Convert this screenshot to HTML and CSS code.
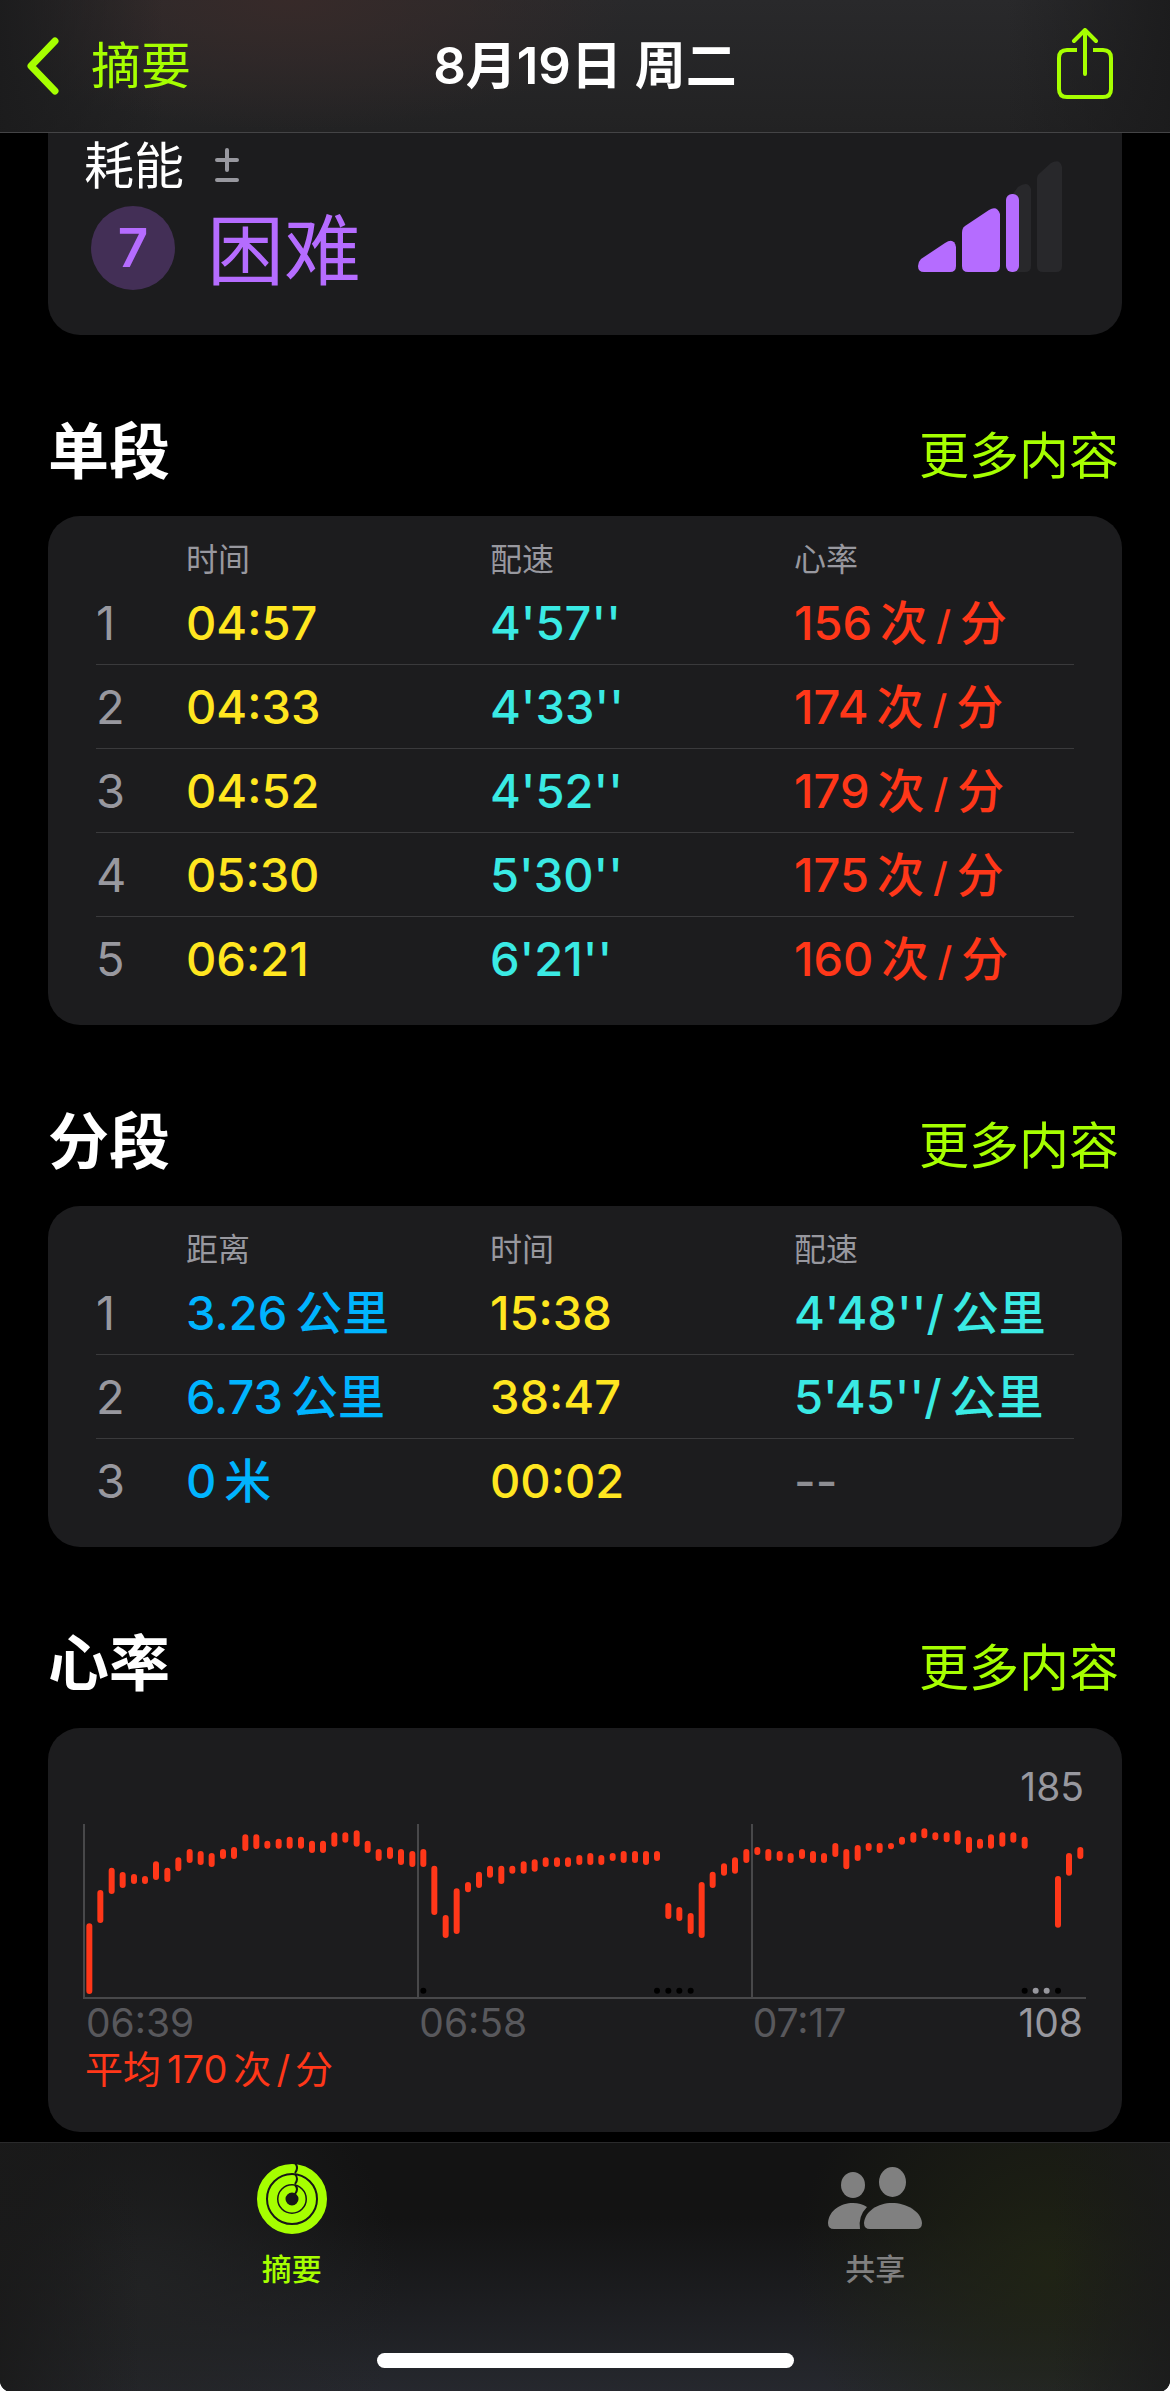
FILE: index.html
```html
<!DOCTYPE html>
<html lang="zh-CN">
<head>
<meta charset="utf-8">
<meta name="viewport" content="width=device-width, initial-scale=1">
<title>8月19日 周二</title>
<link rel="stylesheet" href="styles.css">
</head>
<body>
<div class="app">
  <header class="navbar">
    <a class="navbar-back" href="#summary">
      <svg width="35" height="60" viewBox="0 0 35 60" aria-hidden="true"><path d="M30 5 6 30 30 55" fill="none" stroke="currentColor" stroke-width="7" stroke-linecap="round" stroke-linejoin="round"/></svg>
      <span>摘要</span>
    </a>
    <h1 class="navbar-title">8月19日 周二</h1>
    <button class="navbar-share" type="button" aria-label="分享">
      <svg width="56" height="72" viewBox="0 2 56 72" aria-hidden="true"><g fill="none" stroke="currentColor" stroke-width="4" stroke-linecap="round" stroke-linejoin="round"><path d="M20 24H10q-8 0-8 8v31q0 8 8 8h36q8 0 8-8V32q0-8-8-8H36" stroke-linecap="butt"/><path d="M28 48V4M17 15 28 4l11 11"/></g></svg>
    </button>
  </header>

  <main class="content">
    <section class="card effort">
      <div>
        <h2 class="effort-label">耗能
          <svg width="26" height="36" viewBox="0 0 26 36" aria-hidden="true"><path d="M3 12h20M13 2v20M3 32h20" fill="none" stroke="currentColor" stroke-width="4" stroke-linecap="round"/></svg>
        </h2>
        <p class="effort-value"><span class="effort-badge">7</span>困难</p>
      </div>
      <svg class="effort-bars" width="144" height="111" viewBox="0 0 144 111" aria-hidden="true">
        <g fill="#28282b">
          <path d="M88 42 100 26q10-7 13 2v77q0 6-6 6H94q-6 0-6-6z"/>
          <path d="M119 18q0-4 3-6L133 2q9-5 11 4v99q0 6-6 6h-13q-6 0-6-6z"/>
        </g>
        <g fill="#b56cff">
          <path d="M3 98 27 82q9-6 11 4v19q0 6-6 6H6q-6 0-6-6 0-4 3-7z"/>
          <path d="M44 72q0-5 3-7L71 49q8-5 11 4v52q0 6-6 6H50q-6 0-6-6z"/>
          <rect x="88" y="33" width="13" height="78" rx="6"/>
        </g>
      </svg>
    </section>

    <section>
      <div class="section-head"><h2>单段</h2><a href="#splits">更多内容</a></div>
      <div class="card">
        <table class="data">
          <colgroup><col class="col-index"><col class="col-wide"><col class="col-wide"><col></colgroup>
          <thead><tr><td></td><th scope="col">时间</th><th scope="col">配速</th><th scope="col">心率</th></tr></thead>
          <tbody>
            <tr><th scope="row">1</th><td class="time">04:57</td><td class="pace">4'57''</td><td class="heart">156<span class="unit">次<i>/</i>分</span></td></tr>
            <tr><th scope="row">2</th><td class="time">04:33</td><td class="pace">4'33''</td><td class="heart">174<span class="unit">次<i>/</i>分</span></td></tr>
            <tr><th scope="row">3</th><td class="time">04:52</td><td class="pace">4'52''</td><td class="heart">179<span class="unit">次<i>/</i>分</span></td></tr>
            <tr><th scope="row">4</th><td class="time">05:30</td><td class="pace">5'30''</td><td class="heart">175<span class="unit">次<i>/</i>分</span></td></tr>
            <tr><th scope="row">5</th><td class="time">06:21</td><td class="pace">6'21''</td><td class="heart">160<span class="unit">次<i>/</i>分</span></td></tr>
          </tbody>
        </table>
      </div>
    </section>

    <section>
      <div class="section-head"><h2>分段</h2><a href="#segments">更多内容</a></div>
      <div class="card">
        <table class="data">
          <colgroup><col class="col-index"><col class="col-wide"><col class="col-wide"><col></colgroup>
          <thead><tr><td></td><th scope="col">距离</th><th scope="col">时间</th><th scope="col">配速</th></tr></thead>
          <tbody>
            <tr><th scope="row">1</th><td class="distance">3.26<span class="unit">公里</span></td><td class="time">15:38</td><td class="pace">4'48''/<span class="unit">公里</span></td></tr>
            <tr><th scope="row">2</th><td class="distance">6.73<span class="unit">公里</span></td><td class="time">38:47</td><td class="pace">5'45''/<span class="unit">公里</span></td></tr>
            <tr><th scope="row">3</th><td class="distance">0<span class="unit">米</span></td><td class="time">00:02</td><td class="empty">--</td></tr>
          </tbody>
        </table>
      </div>
    </section>

    <section>
      <div class="section-head"><h2>心率</h2><a href="#heart-rate">更多内容</a></div>
      <div class="card heart-card">
        <p class="chart-max">185</p>
        <svg class="chart" viewBox="0 0 3009 528" role="img" aria-label="心率图表">
          <path d="M3 0V522M1005 0V522M2007 0V522M0 522H3009" fill="none" stroke="#48484a" stroke-width="6"/>
          <path fill="none" stroke="#ff3719" stroke-width="18" stroke-linecap="round" d="M19 307V501M52 207V288M86 140V201M119 153V183M153 159V171M186 165V171M219 121V159M253 140V165M286 109V133M320 84V108M353 90V114M386 96V120M420 84V96M453 78V96M487 40V72M520 40V66M553 59V65M587 53V65M620 47V65M654 47V65M687 59V78M720 59V78M754 34V59M787 34V47M821 28V59M854 59V78M887 84V102M921 78V96M954 84V114M988 90V120M1021 84V120M1054 134V264M1088 282V333M1121 202V321M1155 183V196M1188 152V183M1221 134V152M1255 134V171M1288 134V140M1322 121V140M1355 115V134M1388 109V120M1422 109V120M1455 109V120M1489 102V114M1522 96V114M1555 102V114M1589 96V102M1622 90V108M1656 90V108M1689 90V114M1722 90V102M1756 246V276M1789 258V282M1823 276V321M1856 183V333M1889 152V183M1923 127V146M1956 109V140M1990 84V108M2023 78V84M2056 84V102M2090 90V102M2123 96V108M2157 84V96M2190 90V108M2223 96V108M2257 66V90M2290 84V127M2324 72V102M2357 66V72M2390 66V78M2424 66V67M2457 47V53M2491 34V47M2524 22V34M2557 34V40M2591 34V46M2624 28V53M2658 47V78M2691 53V65M2724 40V65M2758 34V59M2791 34V47M2825 47V65M2925 165V302M2958 96V146M2992 78V96"/>
          <g fill="#000"><circle cx="1021" cy="500" r="9"/><circle cx="1722" cy="500" r="9"/><circle cx="1756" cy="500" r="9"/><circle cx="1789" cy="500" r="9"/><circle cx="1823" cy="500" r="9"/><circle cx="2825" cy="500" r="9"/><circle cx="2925" cy="500" r="9"/></g>
          <g fill="#98989f"><circle cx="2858" cy="500" r="9"/><circle cx="2891" cy="500" r="9"/></g>
        </svg>
        <div class="chart-axis"><span>06:39</span><span>06:58</span><span class="chart-end">07:17<b>108</b></span></div>
        <p class="chart-average">平均<span class="num">170</span>次<i>/</i>分</p>
      </div>
    </section>
  </main>

  <nav class="tabbar">
    <div class="tabs">
      <a class="tab tab-active" href="#summary" aria-current="page">
        <svg width="70" height="72" viewBox="0 0 70 72" aria-hidden="true">
          <circle cx="35" cy="36" r="30.5" fill="none" stroke="currentColor" stroke-width="9"/>
          <circle cx="35" cy="36" r="19.5" fill="none" stroke="currentColor" stroke-width="9"/>
          <circle cx="35" cy="36" r="10" fill="none" stroke="currentColor" stroke-width="7"/>
          <path d="M38 0q4 5 0 10M38 11q4 5 0 10M38 22q4 4 0 9" fill="none" stroke="#141414" stroke-width="2"/>
        </svg>
        <span>摘要</span>
      </a>
      <a class="tab" href="#sharing">
        <svg width="94" height="72" viewBox="0 0 94 72" aria-hidden="true"><g fill="currentColor"><ellipse cx="25" cy="22" rx="12" ry="13"/><ellipse cx="64.500" cy="19" rx="13.500" ry="15"/><path d="M6 66q-6 0-6-6C1 47 13 40 25 40q8 0 14 4-9 9-7 22z"/><path d="M42 66q-6 0-6-6c1-12 14-20 28-20s29 8 30 20q0 6-6 6z"/></g></svg>
        <span>共享</span>
      </a>
    </div>
    <div class="home-indicator"></div>
  </nav>
</div>
</body>
</html>
```
FILE: styles.css
```css
* { box-sizing: border-box; }

html { background: #fff; }

body {
  margin: 0;
  color: #fff;
  font-family: Inter, "Noto Sans CJK SC", sans-serif;
  font-size: 47px;
  -webkit-font-smoothing: antialiased;
}

h1, h2, p { margin: 0; font-weight: 400; }
a { color: inherit; text-decoration: none; }
i { font-style: normal; }
svg { display: block; flex: none; }

.app {
  display: flex;
  flex-direction: column;
  min-height: 100vh;
  background: #000;
  border-radius: 0 0 12px 12px;
  overflow: hidden;
}

/* Navigation bar */
.navbar {
  display: grid;
  grid-template-columns: 1fr auto 1fr;
  align-items: center;
  height: 133px;
  padding: 0 57px 0 25px;
  border-bottom: 1px solid #444446;
  background:
    linear-gradient(90deg, rgba(27, 27, 28, .9), transparent 14%, transparent 86%, rgba(27, 27, 28, .9)),
    radial-gradient(ellipse 340px 130px at 290px 0, #372a29, transparent),
    linear-gradient(#29292b, #222223);
}

.navbar-back {
  display: flex;
  align-items: center;
  gap: 31px;
  color: #a6ff00;
  font-size: 50px;
  line-height: 74px;
}

.navbar-title {
  margin-left: 32px;
  font-size: 51px;
  font-weight: 600;
  line-height: 74px;
}

.navbar-share {
  justify-self: end;
  margin-bottom: 4px;
  padding: 0;
  border: 0;
  background: none;
  color: #a6ff00;
}

/* Content */
.content { flex: 1; padding: 0 48px 10px; }

.card {
  border-radius: 32px;
  background: #1c1c1e;
}

.effort {
  display: flex;
  align-items: flex-start;
  justify-content: space-between;
  height: 202px;
  padding: 0 60px 0 36px;
  border-radius: 0 0 32px 32px;
}

.effort-label {
  display: flex;
  align-items: center;
  gap: 30px;
  font-size: 50px;
  line-height: 66px;
}

.effort-label svg { color: #98989f; }

.effort-value {
  display: flex;
  align-items: flex-start;
  gap: 32px;
  padding-left: 7px;
  color: #b56cff;
  font-size: 77px;
  line-height: 104px;
}

.effort-badge {
  width: 84px;
  height: 84px;
  margin-top: 7px;
  border-radius: 50%;
  background: #432f56;
  font-size: 53px;
  font-weight: 600;
  line-height: 84px;
  text-align: center;
}

.effort-bars { margin-top: 28px; }

.section-head {
  display: flex;
  align-items: baseline;
  justify-content: space-between;
  height: 181px;
  padding: 73px 3px 0 0;
}

.section-head h2 {
  font-size: 61px;
  font-weight: 700;
  line-height: 88px;
}

.section-head a {
  color: #a6ff00;
  font-size: 50px;
}

/* Data tables */
.card:has(.data) { padding: 0 48px 25px; }

.data {
  width: 100%;
  border-spacing: 0;
  table-layout: fixed;
  text-align: left;
}

.col-index { width: 90px; }
.col-wide { width: 304px; }

.data td, .data th { padding: 0; font-weight: 500; white-space: nowrap; }

.data thead td, .data thead th {
  height: 65px;
  vertical-align: bottom;
  color: #98989f;
  font-size: 32px;
  font-weight: 400;
  line-height: 42px;
}

.data tbody td, .data tbody th {
  height: 84px;
  border-bottom: 1px solid #3a3a3c;
  line-height: 60px;
}

.data tbody tr:last-child > * { height: 83px; border-bottom: 0; }
.data tbody th { color: #98989f; font-weight: 400; }
.time { color: #ffe620; }
.pace { color: #3aeae4; }
.heart { color: #ff3719; }
.distance { color: #00b4ff; }
.data .empty { color: #8e8e93; }
.unit { margin-left: 8px; }
.unit i { margin: 0 9px; font-size: 40px; line-height: 1; }

/* Heart rate chart */
.heart-card {
  padding: 36px 36px 40px 35px;
  color: #98989f;
  font-size: 39px;
  line-height: 46px;
}

.chart-max { padding-right: 2px; text-align: right; }
.chart { width: 100%; height: auto; margin-top: 14px; }

.chart-axis {
  display: grid;
  grid-template-columns: 1fr 1fr 1fr;
  padding-left: 3px;
  color: #58585c;
}

.chart-end { display: flex; justify-content: space-between; padding-right: 3px; }
.chart-end b { color: #98989f; font-weight: 400; }
.chart-average { padding-left: 2px; color: #ff3719; font-size: 38px; }
.chart-average .num { margin: 0 6px; }
.chart-average i { margin: 0 5px; }

/* Tab bar */
.tabbar {
  height: 250px;
  padding-top: 20px;
  border-top: 1px solid #2a2a2b;
  background:
    linear-gradient(90deg, rgba(26, 26, 26, .9), transparent 12%, transparent 90%, rgba(26, 26, 26, .8)),
    radial-gradient(ellipse 260px 240px at 90% 50%, rgba(32, 36, 20, .9), transparent),
    radial-gradient(ellipse 260px 260px at 12% 60%, rgba(34, 35, 36, .9), transparent),
    linear-gradient(#131313 30%, #26282e);
}

.tabs { display: grid; grid-template-columns: 1fr 1fr; padding-right: 3px; }

.tab {
  display: flex;
  flex-direction: column;
  align-items: center;
  gap: 12px;
  color: #808080;
  font-size: 30px;
  font-weight: 500;
  line-height: 44px;
}

.tab-active { color: #a6ff00; }

.home-indicator {
  width: 417px;
  height: 15px;
  margin: 62px auto 0;
  border-radius: 8px;
  background: #fff;
}
```
